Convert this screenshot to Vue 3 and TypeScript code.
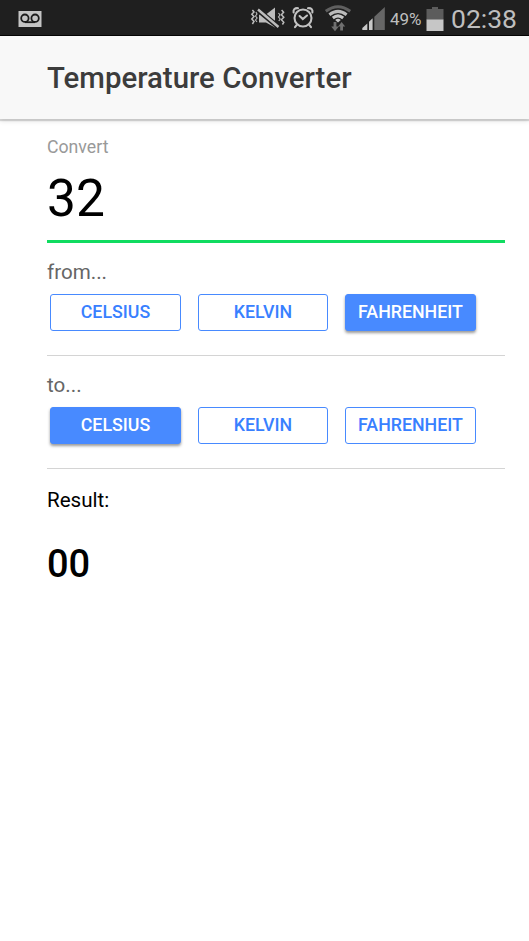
<script setup lang="ts">
import { computed, ref } from 'vue'

type Unit = 'Celsius' | 'Kelvin' | 'Fahrenheit'

const units: Unit[] = ['Celsius', 'Kelvin', 'Fahrenheit']
const amount = ref<number>(32)
const from = ref<Unit>('Fahrenheit')
const to = ref<Unit>('Celsius')

function toCelsius(value: number, unit: Unit): number {
  if (unit === 'Kelvin') return value - 273.15
  if (unit === 'Fahrenheit') return ((value - 32) * 5) / 9
  return value
}

function fromCelsius(value: number, unit: Unit): number {
  if (unit === 'Kelvin') return value + 273.15
  if (unit === 'Fahrenheit') return (value * 9) / 5 + 32
  return value
}

const result = computed<string>(() => {
  const value = fromCelsius(toCelsius(amount.value, from.value), to.value)
  return String(Math.round(value)).padStart(2, '0')
})
</script>

<template>
  <div class="screen">
    <div class="status">
      <svg class="voicemail" viewBox="0 0 24 18" width="24" height="18">
        <rect x="0.5" y="1" width="23" height="16" fill="#c4c4c4" />
        <g fill="none" stroke="#1b1b1b" stroke-width="1.8">
          <circle cx="6.9" cy="8.2" r="3.7" />
          <circle cx="17.1" cy="8.2" r="3.7" />
          <path d="M6.9 12.2H17.1" />
        </g>
      </svg>
      <div class="tray">
        <svg class="mute" viewBox="0 0 36 24" width="36" height="24">
          <path d="M9 8.5H16L25 1.5V21.5L16 16.5H9Z" fill="#bcbcbc" />
          <path d="M7.5 3.5L29 21.5" stroke="#1f1f1f" stroke-width="5" />
          <path d="M8 3.5L28.5 21" stroke="#bcbcbc" stroke-width="2.4" />
          <g fill="none" stroke="#bcbcbc" stroke-width="1.5">
            <path d="M2.4 4L4 6L1.8 8.2L4 10.6L1.8 13L4 15.4L2.4 18" />
            <path d="M5.9 6L7 8L5.5 10L7.1 12L5.5 14L7 16" stroke-width="1.1" />
            <path d="M31.6 4L33.6 6.2L31.4 8.7L33.8 11.2L31.4 13.8L33.8 16.3L32.4 18.5" />
            <path d="M28.5 7L30 9L28.5 11L30.2 13L28.8 15" stroke-width="1.1" />
          </g>
        </svg>
        <svg class="alarm" viewBox="0 0 24 24" width="24" height="24">
          <g fill="none" stroke="#c2c2c2" stroke-width="2.1" stroke-linecap="round">
            <circle cx="12" cy="12" r="8.5" />
            <path d="M2.6 6.4C2 3.6 4 1.8 7 2.2M21.4 6.4C22 3.6 20 1.8 17 2.2M5.8 18.8L4 21.2M18.2 18.8L20 21.2" />
            <path d="M8.6 10L11.8 13L16 9.5" />
          </g>
        </svg>
        <svg class="wifi" viewBox="0 0 28 28" width="28" height="28">
          <g fill="none" stroke-width="3">
            <path d="M1.8 7.3Q14 -1.9 26.2 7.3" stroke="#606060" />
            <path d="M5.4 10.8Q14 4 22.6 10.8" stroke="#bbb" />
            <path d="M8.8 14Q14 9.7 19.2 14" stroke="#c4c4c4" />
          </g>
          <path d="M11.2 16Q14 13.7 16.8 16L14 18.5Z" fill="#c4c4c4" />
          <path d="M9.6 18H12.4V22.5H14.8L11 27.2L7.2 22.5H9.6ZM16.2 26.5V22.4H14.1L17.6 18L21.2 22.4H19V26.5Z" fill="#707070" />
        </svg>
        <svg class="signal" viewBox="0 0 25 24" width="25" height="24">
          <path d="M1.3 23V21L6.3 16.5V23Z" fill="#c7c7c7" />
          <path d="M8 23V14.8L11.6 11.3V23Z" fill="#c7c7c7" />
          <path d="M13.3 23V9.8L23.8 0V23Z" fill="#666" />
        </svg>
        <span class="percent">49%</span>
        <svg class="battery" viewBox="0 0 18 25" width="18" height="25">
          <path d="M0.5 3H6V1H12V3H17.5V14H0.5Z" fill="#5c5c5c" />
          <rect x="0.5" y="13.5" width="17" height="11.5" fill="#c6c6c6" />
        </svg>
        <span class="clock">02:38</span>
      </div>
    </div>

    <header class="toolbar">
      <h1>Temperature Converter</h1>
    </header>

    <main class="content">
      <section class="entry">
        <div class="caption">Convert</div>
        <div class="amount">{{ amount }}</div>
      </section>
      <section class="group">
        <div class="label">from...</div>
        <div class="buttons">
          <button
            v-for="unit in units"
            :key="unit"
            :class="{ active: from === unit }"
            @click="from = unit"
          >{{ unit.toUpperCase() }}</button>
        </div>
      </section>
      <section class="group">
        <div class="label">to...</div>
        <div class="buttons">
          <button
            v-for="unit in units"
            :key="unit"
            :class="{ active: to === unit }"
            @click="to = unit"
          >{{ unit.toUpperCase() }}</button>
        </div>
      </section>
      <section class="outcome">
        <div class="result-label">Result:</div>
        <div class="result">{{ result }}</div>
      </section>
    </main>
  </div>
</template>

<style>
body {
  margin: 0;
  background: #fff;
}
</style>

<style scoped>
.screen {
  height: 941px;
  overflow: hidden;
  background: #fff;
  color: #000;
  font-family: Roboto, "Liberation Sans", sans-serif;
}
.status {
  box-sizing: border-box;
  height: 36px;
  display: flex;
  align-items: center;
  justify-content: space-between;
  padding: 0 13px 0 18px;
  background: #1f1f1f;
  border-bottom: 1px solid #050505;
  color: #bebebe;
}
.voicemail {
  margin-top: 2px;
}
.tray {
  display: flex;
  align-items: center;
  height: 36px;
}
.mute { margin: 1px 5px 0 0; }
.alarm { margin: 1px 9px 0 0; }
.wifi { margin: 0 9px 0 0; }
.signal { margin: 2px 4px 0 0; }
.percent {
  width: 32px;
  margin: 2px 4px 0 0;
  font-size: 17px;
  line-height: 24px;
  white-space: nowrap;
}
.battery { margin: 1px 7px 0 0; }
.clock {
  width: 65px;
  padding-top: 2px;
  font-size: 26.5px;
  line-height: 34px;
  white-space: nowrap;
}
.toolbar {
  height: 83px;
  display: flex;
  align-items: center;
  padding-left: 47px;
  background: #f8f8f8;
  box-shadow: 0 2px 1px rgba(0, 0, 0, 0.14), 0 2px 5px rgba(0, 0, 0, 0.12);
}
h1 {
  margin: 0;
  font-size: 29.4px;
  line-height: 40px;
  font-weight: 500;
  color: #3c3c3c;
  white-space: nowrap;
}
.content {
  padding: 0 24px 0 47px;
}
.entry {
  box-sizing: border-box;
  height: 123.5px;
  padding-top: 17px;
  border-bottom: 3px solid #10dc60;
}
.caption {
  font-size: 17.7px;
  line-height: 22px;
  color: #999;
}
.amount {
  margin-top: 11px;
  font-size: 51.5px;
  line-height: 60px;
}
.group {
  box-sizing: border-box;
  height: 113px;
  padding-top: 17px;
  border-bottom: 1px solid #d4d4d4;
}
.label {
  font-size: 20.6px;
  line-height: 24px;
  color: #666;
}
.buttons {
  display: grid;
  grid-template-columns: 131px 130px 131px;
  gap: 17px;
  padding: 10px 0 0 3px;
}
button {
  height: 37px;
  padding: 0 0 1px;
  border: 1px solid #488aff;
  border-radius: 3px;
  background: transparent;
  color: #3880ff;
  font-family: inherit;
  font-size: 17.8px;
  font-weight: 500;
  line-height: 20px;
  white-space: nowrap;
}
button.active {
  background: #488aff;
  color: #fff;
  box-shadow: 0 2px 3px rgba(0, 0, 0, 0.4);
}
.outcome {
  padding-top: 19px;
}
.result-label {
  font-size: 20.6px;
  line-height: 24px;
}
.result {
  margin-top: 30px;
  font-size: 38px;
  line-height: 44px;
  font-weight: 500;
}
</style>
